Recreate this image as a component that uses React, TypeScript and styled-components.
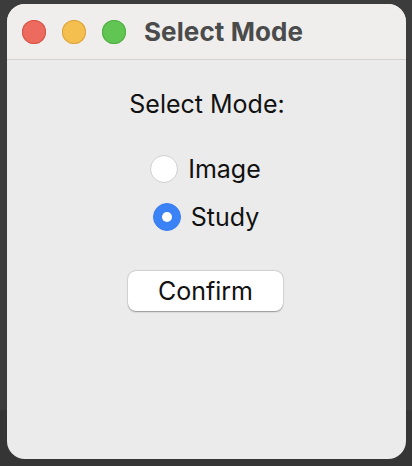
import React, { useState } from "react";
import styled, { createGlobalStyle } from "styled-components";

const Global = createGlobalStyle`
  html, body { margin: 0; padding: 0; }
  body {
    background: #3a3a3a;
    width: 412px;
    height: 466px;
    overflow: hidden;
    font-family: Inter, "Noto Sans", "Liberation Sans", sans-serif;
  }
`;

const Desktop = styled.div`
  width: 412px;
  height: 466px;
  padding: 4px 0 0 7px;
  box-sizing: border-box;
  background: linear-gradient(#3c3c3c 0 410px, #353535 410px);
`;

const Window = styled.div`
  width: 399px;
  height: 455px;
  border-radius: 18px;
  overflow: hidden;
  background: #ebebeb;
  display: flex;
  flex-direction: column;
`;

const TitleBar = styled.div`
  height: 56px;
  flex: none;
  background: #efeeec;
  border-bottom: 1px solid #d2d2d2;
  display: flex;
  align-items: center;
  padding-left: 15px;
  gap: 16px;
  box-sizing: border-box;
`;

const Light = styled.span<{ $c: string; $b: string }>`
  width: 24px;
  height: 24px;
  border-radius: 50%;
  background: ${(p) => p.$c};
  box-shadow: inset 0 0 0 1px ${(p) => p.$b};
  flex: none;
`;

const Title = styled.div`
  font-size: 26px;
  font-weight: 700;
  color: #4b4b4b;
  margin-left: 2px;
  letter-spacing: 0.1px;
`;

const Content = styled.div`
  display: flex;
  flex-direction: column;
  align-items: center;
  padding-top: 29px;
`;

const Label = styled.div`
  font-size: 25px;
  color: #111;
  height: 30px;
  line-height: 30px;
  margin-left: 1px;
`;

const Radios = styled.div`
  display: flex;
  flex-direction: column;
  align-items: center;
  gap: 20px;
  margin-top: 36px;
`;

const RadioRow = styled.label<{ $shift: number }>`
  display: flex;
  align-items: center;
  gap: 10px;
  cursor: pointer;
  margin-left: ${(p) => p.$shift}px;
`;

const Circle = styled.span<{ $on: boolean }>`
  width: 28px;
  height: 28px;
  box-sizing: border-box;
  border-radius: 50%;
  flex: none;
  display: flex;
  align-items: center;
  justify-content: center;
  background: ${(p) => (p.$on ? "#3b82f7" : "#ffffff")};
  border: 1px solid ${(p) => (p.$on ? "#3a7ff0" : "#cfcfcf")};
  &::after {
    content: "";
    width: 10px;
    height: 10px;
    border-radius: 50%;
    background: #fff;
    display: ${(p) => (p.$on ? "block" : "none")};
  }
`;

const RadioText = styled.span`
  font-size: 25px;
  color: #111;
  line-height: 28px;
`;

const Button = styled.button`
  margin-top: 40px;
  width: 155px;
  height: 40px;
  border: none;
  border-radius: 8px;
  background: #fff;
  box-shadow: 0 0.5px 1.5px rgba(0, 0, 0, 0.35), 0 0 0 0.5px rgba(0, 0, 0, 0.08);
  font-family: inherit;
  font-size: 25px;
  color: #111;
  padding: 0;
  margin-left: -2px;
`;

export default function App() {
  const [mode, setMode] = useState("Study");
  return (
    <>
      <Global />
      <Desktop>
        <Window>
          <TitleBar>
            <Light $c="#ec6a5e" $b="#d65347" />
            <Light $c="#f5bf4f" $b="#d9a33b" />
            <Light $c="#61c554" $b="#4ead41" />
            <Title>Select Mode</Title>
          </TitleBar>
          <Content>
            <Label>Select Mode:</Label>
            <Radios>
              {["Image", "Study"].map((m, i) => (
                <RadioRow key={m} $shift={i === 0 ? -2 : -1} onClick={() => setMode(m)}>
                  <Circle $on={mode === m} />
                  <RadioText>{m}</RadioText>
                </RadioRow>
              ))}
            </Radios>
            <Button>Confirm</Button>
          </Content>
        </Window>
      </Desktop>
    </>
  );
}
